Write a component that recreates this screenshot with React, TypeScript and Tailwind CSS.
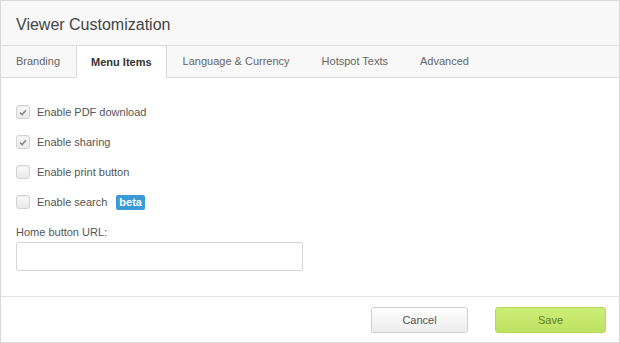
import React from "react";

const tabs = ["Branding", "Menu Items", "Language & Currency", "Hotspot Texts", "Advanced"];

const options = [
  { label: "Enable PDF download", checked: true },
  { label: "Enable sharing", checked: true },
  { label: "Enable print button", checked: false },
  { label: "Enable search", checked: false, beta: true },
];

const Checkbox = ({ checked }: { checked: boolean }) => (
  <span className="flex h-[14px] w-[14px] items-center justify-center rounded-[3px] border border-[#d2d2d2] bg-gradient-to-b from-[#fafafa] to-[#e9e9e9] shadow-[inset_0_1px_1px_rgba(0,0,0,0.05)]">
    {checked && (
      <svg width="8" height="7" viewBox="0 0 8 7">
        <path d="M1 3.6 L3.1 5.6 L7 1.2" fill="none" stroke="#8a8a8a" strokeWidth="1.6" />
      </svg>
    )}
  </span>
);

export default function App() {
  return (
    <div
      className="flex h-[343px] w-[620px] flex-col border border-[#d9d9d9] bg-white text-[11px] text-[#555]"
      style={{ fontFamily: '"Liberation Sans", Arial, sans-serif' }}
    >
      <div className="flex h-[45px] items-center border-b border-[#dcdcdc] bg-[#f8f8f8] px-[15px] pt-[4px] text-[16px] text-[#444]">
        Viewer Customization
      </div>
      <div className="flex h-[32px] border-b border-[#dcdcdc] bg-[#f8f8f8]">
        {tabs.map((t) => {
          const active = t === "Menu Items";
          return (
            <div
              key={t}
              className={`flex items-center first:pl-[15px] ${
                active
                  ? "-mb-px border-x border-[#dcdcdc] bg-white px-[14px] font-bold text-[#333]"
                  : "px-[16px] text-[#666]"
              }`}
            >
              {t}
            </div>
          );
        })}
      </div>
      <div className="flex flex-1 flex-col px-[15px] pt-[27px]">
        <div className="flex flex-col gap-[16px]">
          {options.map((o) => (
            <div key={o.label} className="flex h-[14px] items-center gap-[7px]">
              <Checkbox checked={o.checked} />
              <span>{o.label}</span>
              {o.beta && (
                <span className="ml-[2px] rounded-[2px] bg-[#3b9ad8] px-[3px] py-[1px] font-bold leading-[13px] text-white">
                  beta
                </span>
              )}
            </div>
          ))}
        </div>
        <div className="mt-[15px]">Home button URL:</div>
        <div className="mt-[1px] h-[29px] w-[287px] rounded-[2px] border border-[#d6d6d6] bg-white" />
      </div>
      <div className="flex h-[46px] items-center justify-end gap-[27px] border-t border-[#e3e3e3] pr-[13px] pt-[1px]">
        <button className="h-[26px] w-[97px] rounded-[3px] border border-[#cfcfcf] bg-gradient-to-b from-white to-[#ececec] text-[11px] text-[#555]">
          Cancel
        </button>
        <button className="h-[26px] w-[111px] rounded-[3px] border border-[#b6d95c] bg-gradient-to-b from-[#cdee76] to-[#bfe262] text-[11px] text-[#5f7f1f]">
          Save
        </button>
      </div>
    </div>
  );
}
